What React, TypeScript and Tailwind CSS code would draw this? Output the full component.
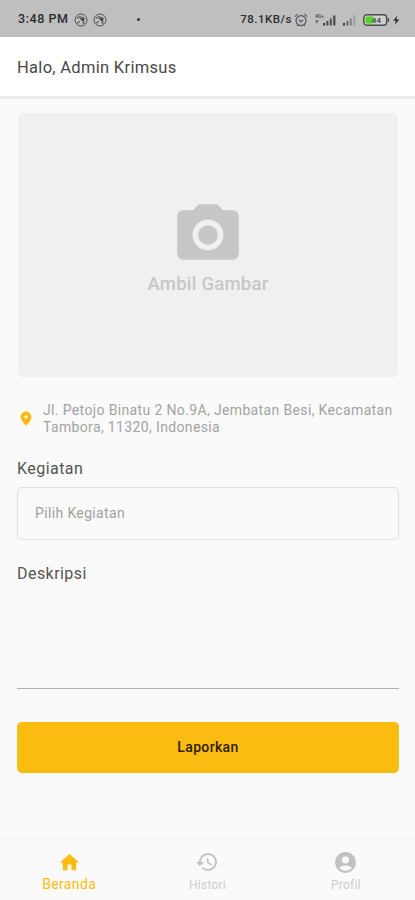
import React from "react";
import {
  MdAccountCircle,
  MdCameraAlt,
  MdHistory,
  MdHome,
} from "react-icons/md";

function MutedIcon() {
  return (
    <svg width="14" height="14" viewBox="0 0 14 14" fill="none" stroke="#505050">
      <circle cx="7" cy="7" r="6" strokeWidth="1" />
      <path d="M3 5.2 5.8 3.6l5 1.8M3 10.2l2.8-1.6M8.6 9l1.8 1.8" strokeWidth="1.1" />
      <path d="M5 5.2h5.2v4L7.8 7.4z" fill="#444" stroke="none" />
    </svg>
  );
}

function AlarmIcon() {
  return (
    <svg width="14" height="14" viewBox="0 0 14 14" fill="none" stroke="#505050">
      <circle cx="7" cy="7.6" r="5" strokeWidth="1.1" />
      <path d="M.8 3.6 3.6 1.2M13.2 3.6l-2.8-2.4M3 12.8l1-1M11 12.8l-1-1" strokeWidth="1.1" />
      <path d="m4.9 6.8 2.1 1.9 2.1-1.9" strokeWidth="1.1" />
    </svg>
  );
}

function PinIcon() {
  return (
    <svg className="mb-[2px] ml-[3px]" width="12" height="15" viewBox="0 0 12 15">
      <path
        fill="#fbb90f"
        fillRule="evenodd"
        d="M6 .5A5.4 5.4 0 0 0 .6 5.9C.6 9.8 6 14.5 6 14.5s5.4-4.7 5.4-8.6A5.4 5.4 0 0 0 6 .5zm0 3.7a1.6 1.6 0 1 1 0 3.2 1.6 1.6 0 0 1 0-3.2z"
      />
    </svg>
  );
}

function SignalIcon({ full }: { full?: boolean }) {
  return (
    <svg width="16" height="12" viewBox="0 0 16 12">
      <rect x="1" y="9" width="2" height="2.5" fill="#3c3c3c" />
      <rect x="4.4" y="7" width="2" height="4.5" fill={full ? "#4a4a4a" : "#666"} />
      <rect x="7.8" y="4.5" width="2" height="7" fill={full ? "#4a4a4a" : "#808080"} />
      <rect x="11.2" y="1.5" width="2.2" height="10" fill={full ? "#4a4a4a" : "#a2a2a2"} />
    </svg>
  );
}

function StatusBar() {
  return (
    <div className="flex h-[37px] items-center bg-[#bfbfbf] pt-[2px] pr-[14px] pl-[18px] text-[#2c2c2c]">
      <span className="w-[56px] text-[12.5px] font-medium tracking-[0.55px] whitespace-nowrap">3:48 PM</span>
      <div className="flex gap-[5px]">
        <MutedIcon />
        <MutedIcon />
      </div>
      <span className="ml-[30px] size-[3px] rounded-full bg-[#333]" />
      <span className="ml-auto text-[11.5px] font-medium tracking-[0.5px] whitespace-nowrap">78.1KB/s</span>
      <div className="ml-[2px]">
        <AlarmIcon />
      </div>
      <div className="ml-[7px] flex h-3 items-start">
        <div className="flex w-[7px] flex-col text-[5px] leading-[5px] font-bold whitespace-nowrap text-[#555]">
          <span>4G+</span>
          <svg className="mt-px" width="4" height="4" viewBox="0 0 4 4">
            <path d="M0 0h4L1.6 4z" fill="#777" />
          </svg>
        </div>
        <SignalIcon full />
      </div>
      <div className="ml-[4px]">
        <SignalIcon />
      </div>
      <svg className="ml-[5px]" width="38" height="12" viewBox="0 0 38 12">
        <rect x=".8" y=".8" width="22.8" height="10.4" rx="3" fill="#cfcfcf" stroke="#4b4b4b" strokeWidth="1.4" />
        <path d="M3.8 2.5h6.7v7H3.8A1.4 1.4 0 0 1 2.6 8V4a1.4 1.4 0 0 1 1.2-1.5z" fill="#55d322" />
        <path d="M25.4 4v4" stroke="#4b4b4b" strokeWidth="1.4" />
        <text x="13.4" y="8.9" textAnchor="middle" fontSize="8" fontWeight="500" fill="#3c3c3c">44</text>
        <path d="M34.4 1.6 30.1 6.7h2.8l-1 4 4.4-5.1h-2.9z" fill="#2c2c2c" />
      </svg>
    </div>
  );
}

const tabs = [
  { label: "Beranda", icon: MdHome, size: 23, active: true },
  { label: "Histori", icon: MdHistory, size: 24, active: false },
  { label: "Profil", icon: MdAccountCircle, size: 25, active: false },
];

function BottomNav() {
  return (
    <nav className="grid h-[62px] grid-cols-3 border-t border-[#f1f1f1] bg-[#fafafa]">
      {tabs.map(({ label, icon: Icon, size, active }) => (
        <button
          key={label}
          className={
            active
              ? "flex flex-col items-center pt-[10px] text-[#fbbc12]"
              : "flex flex-col items-center pt-[10px] text-[#c2c2c2]"
          }
        >
          <span className="flex h-[26px] items-center">
            <Icon size={size} />
          </span>
          <span
            className={
              active
                ? "text-[14px] leading-[18px] tracking-[0.35px]"
                : "text-[12px] leading-[20px] tracking-[0.25px] text-[#cdcdcd]"
            }
          >
            {label}
          </span>
        </button>
      ))}
    </nav>
  );
}

export default function App() {
  return (
    <div className="flex h-[900px] w-[415px] flex-col bg-[#fafafa] font-['Roboto',sans-serif]">
      <StatusBar />

      <header className="flex h-[62px] items-center border-b-[3px] border-[#ececec] bg-white px-[17px] pt-[3px]">
        <h1 className="text-[16.5px] tracking-[0.3px] text-[#484848]">Halo, Admin Krimsus</h1>
      </header>

      <main className="flex flex-1 flex-col pt-[14px] pr-[16px] pl-[17px]">
        {/* Foto */}
        <button className="mx-px flex h-[264px] flex-col items-center rounded-md bg-[#f0f0f0] pt-[85px] text-[#c7c7c7]">
          <MdCameraAlt size={74} />
          <span className="mt-px text-[18.5px] leading-[22px] font-medium tracking-[0.22px]">Ambil Gambar</span>
        </button>

        {/* Lokasi */}
        <div className="mt-[25px] flex items-center">
          <PinIcon />
          <p className="ml-[11px] text-[14px] leading-[17px] tracking-[0.36px] whitespace-nowrap text-[#a3a3a3]">
            Jl. Petojo Binatu 2 No.9A, Jembatan Besi, Kecamatan
            <br />
            Tambora, 11320, Indonesia
          </p>
        </div>

        <label className="mt-[23px] text-[16px] leading-[20px] tracking-[0.45px] text-[#555]">Kegiatan</label>
        <div className="mt-[8px] flex h-[53px] items-center rounded-[5px] border border-[#e0e0e0] px-[17px] text-[14px] tracking-[0.36px] text-[#a0a0a0]">
          Pilih Kegiatan
        </div>

        <label className="mt-[24px] text-[16px] leading-[20px] tracking-[0.45px] text-[#555]">Deskripsi</label>
        <textarea className="h-[105px] resize-none border-b border-[#b0b0b0] outline-none" />

        <button className="mt-[33px] h-[51px] rounded-[5px] bg-[#fbbc12] text-[14px] font-medium tracking-[0.35px] text-[#2c2205]">
          Laporkan
        </button>
      </main>

      <BottomNav />
    </div>
  );
}
